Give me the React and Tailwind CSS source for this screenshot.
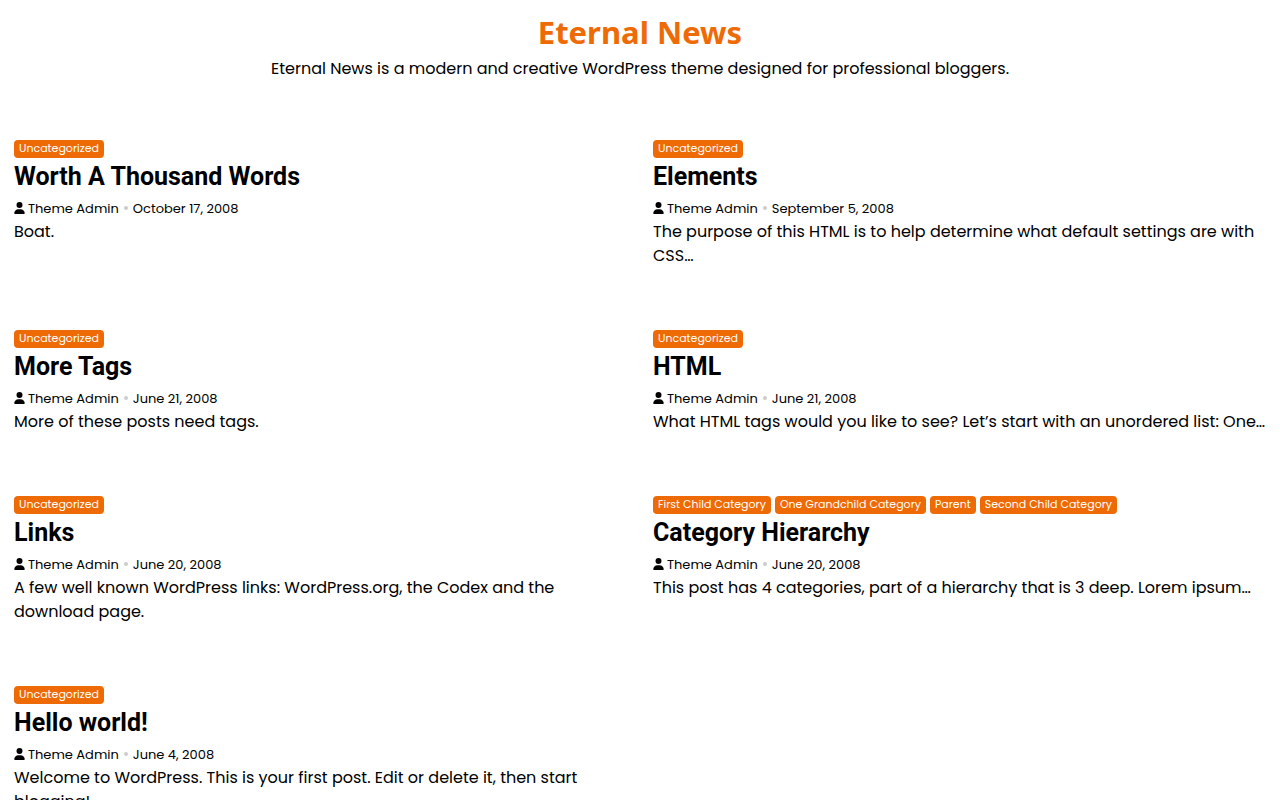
import { FaUser } from "react-icons/fa6";

const posts = [
  { title: "Worth A Thousand Words", date: "October 17, 2008", excerpt: "Boat." },
  { title: "Elements", date: "September 5, 2008", excerpt: "The purpose of this HTML is to help determine what default settings are with CSS…" },
  { title: "More Tags", date: "June 21, 2008", excerpt: "More of these posts need tags." },
  { title: "HTML", date: "June 21, 2008", excerpt: "What HTML tags would you like to see? Let’s start with an unordered list: One…" },
  { title: "Links", date: "June 20, 2008", excerpt: "A few well known WordPress links: WordPress.org, the Codex and the download page." },
  {
    title: "Category Hierarchy",
    date: "June 20, 2008",
    excerpt: "This post has 4 categories, part of a hierarchy that is 3 deep. Lorem ipsum…",
    categories: ["First Child Category", "One Grandchild Category", "Parent", "Second Child Category"],
  },
  { title: "Hello world!", date: "June 4, 2008", excerpt: "Welcome to WordPress. This is your first post. Edit or delete it, then start blogging!" },
];

function Post({ title, date, excerpt, categories = ["Uncategorized"] }) {
  return (
    <article>
      <ul className="flex flex-wrap gap-1">
        {categories.map((name) => (
          <li key={name} className="flex">
            <a href="#" className="rounded-[4px] bg-[#ee6a04] px-[5px] pb-0.5 text-[11px] leading-4 text-white">
              {name}
            </a>
          </li>
        ))}
      </ul>
      <h2 className="mt-1 font-[Roboto,sans-serif] text-[25px] leading-[30px] font-bold">
        <a href="#">{title}</a>
      </h2>
      <div className="mt-1.5 flex items-center text-[13px] leading-[22px]">
        <a href="#" className="flex items-center gap-[3px]">
          <FaUser className="mb-0.5 h-3 w-[11px]" aria-hidden="true" />
          Theme Admin
        </a>
        <span className="mx-[5px] mb-0.5 size-1 rounded-full bg-[#cccccc]" />
        <a href="#">
          <time>{date}</time>
        </a>
      </div>
      <p>{excerpt}</p>
    </article>
  );
}

export default function App() {
  return (
    <div className="min-h-screen bg-white font-[Poppins,Inter,sans-serif] text-base leading-6 text-black">
      <header className="px-3.5 pt-3 text-center">
        <h1 className="font-['Noto_Sans',sans-serif] text-[31px] leading-[41px] font-bold text-[#ee6a04]">
          <a href="#">Eternal News</a>
        </h1>
        <p className="mt-1">Eternal News is a modern and creative WordPress theme designed for professional bloggers.</p>
      </header>
      <main className="grid grid-cols-2 gap-x-[26px] gap-y-[62px] px-3.5 pt-[59px] pb-[62px]">
        {posts.map((post) => (
          <Post key={post.title} {...post} />
        ))}
      </main>
    </div>
  );
}
